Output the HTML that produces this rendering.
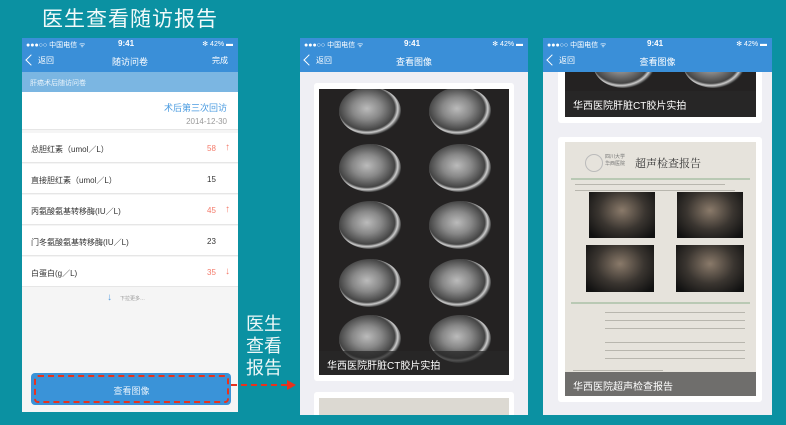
<!DOCTYPE html>
<html><head><meta charset="utf-8"><style>
*{margin:0;padding:0;box-sizing:border-box}
body{width:786px;height:425px;background:#0b91a2;position:relative;overflow:hidden;font-family:"Liberation Sans","Noto Sans CJK SC",sans-serif}
.abs{position:absolute}
.title{left:42px;top:3px;font-size:21px;color:#f2fafa;letter-spacing:1px}
.phone{position:absolute;background:#efeff4;overflow:hidden}
.sb{position:absolute;left:0;right:0;top:0;height:13px;background:#3a8fd8;color:#fff;font-size:7px}
.nav{position:absolute;left:0;right:0;top:13px;height:21px;background:#3a8fd8;color:#fff;font-size:9px}
.nav .t{position:absolute;left:0;right:0;text-align:center;top:4px}
.nav .b{position:absolute;left:16px;top:4px;font-size:8px}
.nav .ch{position:absolute;left:5px;top:5px;width:8px;height:8px;border-left:1px solid #fff;border-bottom:1px solid #fff;transform:rotate(45deg)}
.row{position:absolute;left:0;right:0;height:30px;background:#fff;border-bottom:1px solid #e6e6e6;font-size:8px;color:#333}
.row .l{position:absolute;left:9px;top:11px}
.row .v{position:absolute;left:185px;top:11px}
.red{color:#f47a6a}
.card{position:absolute;background:#fff;border-radius:3px}
.ct{position:absolute;background:#242222;overflow:hidden}
.c{position:absolute;width:62px;height:48px;border-radius:50%;background:radial-gradient(ellipse at 45% 45%,#bbb 0,#888 30%,#444 58%,#ccc 64%,#2a2a2a 72%)}
.cap{position:absolute;left:0;right:0;bottom:0;height:24px;background:rgba(40,40,40,.75);color:#fff;font-size:10px;padding:6px 0 0 8px}
.us{position:absolute;background:#e6e3dc;overflow:hidden}
.usimg{position:absolute;background:radial-gradient(ellipse at 50% 40%,#8a7a6a 0,#3a3530 50%,#111 90%)}
.ln{position:absolute;height:2px;background:#9a9890;opacity:.6}
</style></head><body>
<div class="abs title">医生查看随访报告</div>

<div class="phone" style="left:22px;top:38px;width:216px;height:374px;background:#f5f5f5">
 <div class="sb"><span class="abs" style="left:4px;top:2px">●●●○○ 中国电信 ᯤ</span><span class="abs" style="left:96px;top:1px;font-size:8px;font-weight:bold">9:41</span><span class="abs" style="right:5px;top:2px">✻ 42% ▬</span></div>
 <div class="nav"><div class="ch"></div><span class="b">返回</span><div class="t">随访问卷</div><span class="abs" style="right:10px;top:4px;font-size:8px">完成</span></div>
 <div class="abs" style="left:0;right:0;top:34px;height:20px;background:#7bb6e2;color:#eaf4fb;font-size:7px;padding:6px 0 0 8px">肝癌术后随访问卷</div>
 <div class="abs" style="left:0;right:0;top:54px;height:38px;background:#fff;border-bottom:1px solid #e6e6e6">
  <div class="abs" style="right:11px;top:9px;font-size:9px;color:#4a9be0">术后第三次回访</div>
  <div class="abs" style="right:11px;top:25px;font-size:8px;color:#999">2014-12-30</div></div>
 <div class="row" style="top:95px"><span class="l">总胆红素（umol／L）</span><span class="v red">58</span><span class="abs red" style="left:203px;top:9px;font-size:10px">↑</span></div>
 <div class="row" style="top:126px"><span class="l">直接胆红素（umol／L）</span><span class="v">15</span></div>
 <div class="row" style="top:157px"><span class="l">丙氨酸氨基转移酶(IU／L)</span><span class="v red">45</span><span class="abs red" style="left:203px;top:9px;font-size:10px">↑</span></div>
 <div class="row" style="top:188px"><span class="l">门冬氨酸氨基转移酶(IU／L)</span><span class="v">23</span></div>
 <div class="row" style="top:219px"><span class="l">白蛋白(g／L)</span><span class="v red">35</span><span class="abs red" style="left:203px;top:9px;font-size:10px">↓</span></div>
 <div class="abs" style="left:85px;top:254px;color:#5aa0e0;font-size:10px">↓</div>
 <div class="abs" style="left:98px;top:257px;color:#999;font-size:5px">下拉更多…</div>
</div>
<div class="abs" style="left:31px;top:373px;width:200px;height:32px;background:#3a93d8;border-radius:4px"></div>
<div class="abs" style="left:34px;top:375px;width:195px;height:28px;border:2px dashed #e8321e;border-radius:4px;color:#e6f1fb;font-size:9px;text-align:center;padding-top:7px">查看图像</div>
<div class="abs" style="left:231px;top:384px;width:56px;border-top:2px dashed #e8321e"></div>
<div class="abs" style="left:287px;top:380px;border-left:9px solid #e8321e;border-top:5px solid transparent;border-bottom:5px solid transparent"></div>
<div class="abs" style="left:246px;top:313px;color:#eef8f8;font-size:18px;line-height:22px;width:40px">医生<br>查看<br>报告</div>

<div class="phone" style="left:300px;top:38px;width:228px;height:377px">
 <div class="sb"><span class="abs" style="left:4px;top:2px">●●●○○ 中国电信 ᯤ</span><span class="abs" style="left:104px;top:1px;font-size:8px;font-weight:bold">9:41</span><span class="abs" style="right:5px;top:2px">✻ 42% ▬</span></div>
 <div class="nav"><div class="ch"></div><span class="b">返回</span><div class="t">查看图像</div></div>
 <div class="card" style="left:14px;top:45px;width:200px;height:298px">
  <div class="ct" style="left:5px;top:6px;width:190px;height:286px">
   <div class="c" style="left:20px;top:-2px"></div><div class="c" style="left:110px;top:-2px"></div>
   <div class="c" style="left:20px;top:55px"></div><div class="c" style="left:110px;top:55px"></div>
   <div class="c" style="left:20px;top:112px"></div><div class="c" style="left:110px;top:112px"></div>
   <div class="c" style="left:20px;top:170px"></div><div class="c" style="left:110px;top:170px"></div>
   <div class="c" style="left:20px;top:226px"></div><div class="c" style="left:110px;top:226px"></div>
   <div class="cap">华西医院肝脏CT胶片实拍</div>
  </div></div>
 <div class="card" style="left:14px;top:354px;width:200px;height:40px"><div class="abs" style="left:5px;top:6px;width:190px;height:40px;background:#dcd9d2"></div></div>
</div>

<div class="phone" style="left:543px;top:38px;width:229px;height:377px">
 <div class="card" style="left:15px;top:20px;width:204px;height:65px">
  <div class="ct" style="left:7px;top:0;width:191px;height:59px">
   <div class="c" style="left:28px;top:-18px"></div><div class="c" style="left:118px;top:-18px"></div>
   <div class="cap" style="height:26px">华西医院肝脏CT胶片实拍</div></div></div>
 <div class="sb"><span class="abs" style="left:4px;top:2px">●●●○○ 中国电信 ᯤ</span><span class="abs" style="left:104px;top:1px;font-size:8px;font-weight:bold">9:41</span><span class="abs" style="right:5px;top:2px">✻ 42% ▬</span></div>
 <div class="nav"><div class="ch"></div><span class="b">返回</span><div class="t">查看图像</div></div>
 <div class="card" style="left:15px;top:99px;width:204px;height:265px">
  <div class="us" style="left:7px;top:5px;width:191px;height:254px">
   <div class="abs" style="left:20px;top:12px;width:18px;height:18px;border-radius:50%;border:1px solid #bbb"></div>
   <div class="abs" style="left:40px;top:12px;font-size:5px;color:#777;line-height:7px">四川大学<br>华西医院</div>
   <div class="abs" style="left:70px;top:13px;font-size:11px;color:#333;font-family:'Noto Serif CJK SC',serif">超声检查报告</div>
   <div class="ln" style="left:6px;right:6px;top:36px;background:#9bb89a"></div>
   <div class="ln" style="left:10px;width:150px;top:42px;height:1px"></div>
   <div class="ln" style="left:10px;width:160px;top:48px;height:1px"></div>
   <div class="usimg" style="left:24px;top:50px;width:66px;height:46px"></div>
   <div class="usimg" style="left:112px;top:50px;width:66px;height:46px"></div>
   <div class="usimg" style="left:21px;top:103px;width:68px;height:47px"></div>
   <div class="usimg" style="left:111px;top:103px;width:68px;height:47px"></div>
   <div class="ln" style="left:6px;right:6px;top:160px;background:#9bb89a"></div>
   <div class="ln" style="left:40px;width:140px;top:170px;height:1px"></div>
   <div class="ln" style="left:40px;width:140px;top:178px;height:1px"></div>
   <div class="ln" style="left:40px;width:140px;top:186px;height:1px"></div>
   <div class="ln" style="left:40px;width:140px;top:200px;height:1px"></div>
   <div class="ln" style="left:40px;width:140px;top:208px;height:1px"></div>
   <div class="ln" style="left:40px;width:140px;top:216px;height:1px"></div>
   <div class="ln" style="left:8px;width:90px;top:228px;height:1px"></div>
   <div class="cap" style="height:24px;background:rgba(60,60,60,.7)">华西医院超声检查报告</div>
  </div></div>
</div>
</body></html>
